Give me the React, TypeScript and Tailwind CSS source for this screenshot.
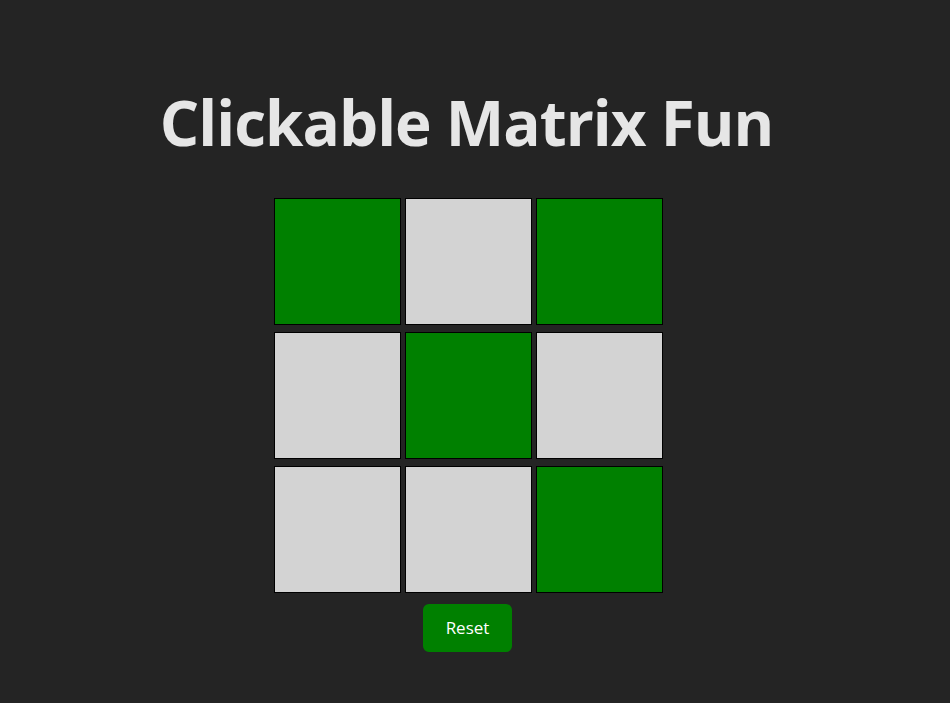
import { useState } from "react";

const initial = [true, false, true, false, true, false, false, false, true];

export default function App() {
  const [cells, setCells] = useState<boolean[]>(initial);

  const toggle = (i: number) => {
    setCells((prev) => prev.map((c, j) => (j === i ? !c : c)));
  };

  const rows = [0, 1, 2].map((r) => cells.slice(r * 3, r * 3 + 3));

  return (
    <div className="min-h-[703px] w-full bg-[#242424] text-[#e6e6e6] [font-family:'Open_Sans',sans-serif]">
      <div className="w-[937px] flex flex-col items-center pt-[88px]">
        <h1 className="text-[62px] font-bold leading-[1.1] tracking-[-1px] -ml-[4px]">Clickable Matrix Fun</h1>
        <div className="mt-[42px] flex flex-col gap-[7px]">
          {rows.map((row, r) => (
            <div key={r} className="flex gap-[4px]">
              {row.map((on, c) => (
                <div
                  key={c}
                  onClick={() => toggle(r * 3 + c)}
                  className={`w-[127px] h-[127px] border border-black cursor-pointer ${
                    on ? "bg-[#008000]" : "bg-[#d3d3d3]"
                  }`}
                />
              ))}
            </div>
          ))}
        </div>
        <button
          onClick={() => setCells(initial)}
          className="mt-[11px] -ml-[2px] w-[89px] h-[48px] rounded-[6px] bg-[#008000] text-white text-[17px] cursor-pointer"
        >
          Reset
        </button>
      </div>
    </div>
  );
}
